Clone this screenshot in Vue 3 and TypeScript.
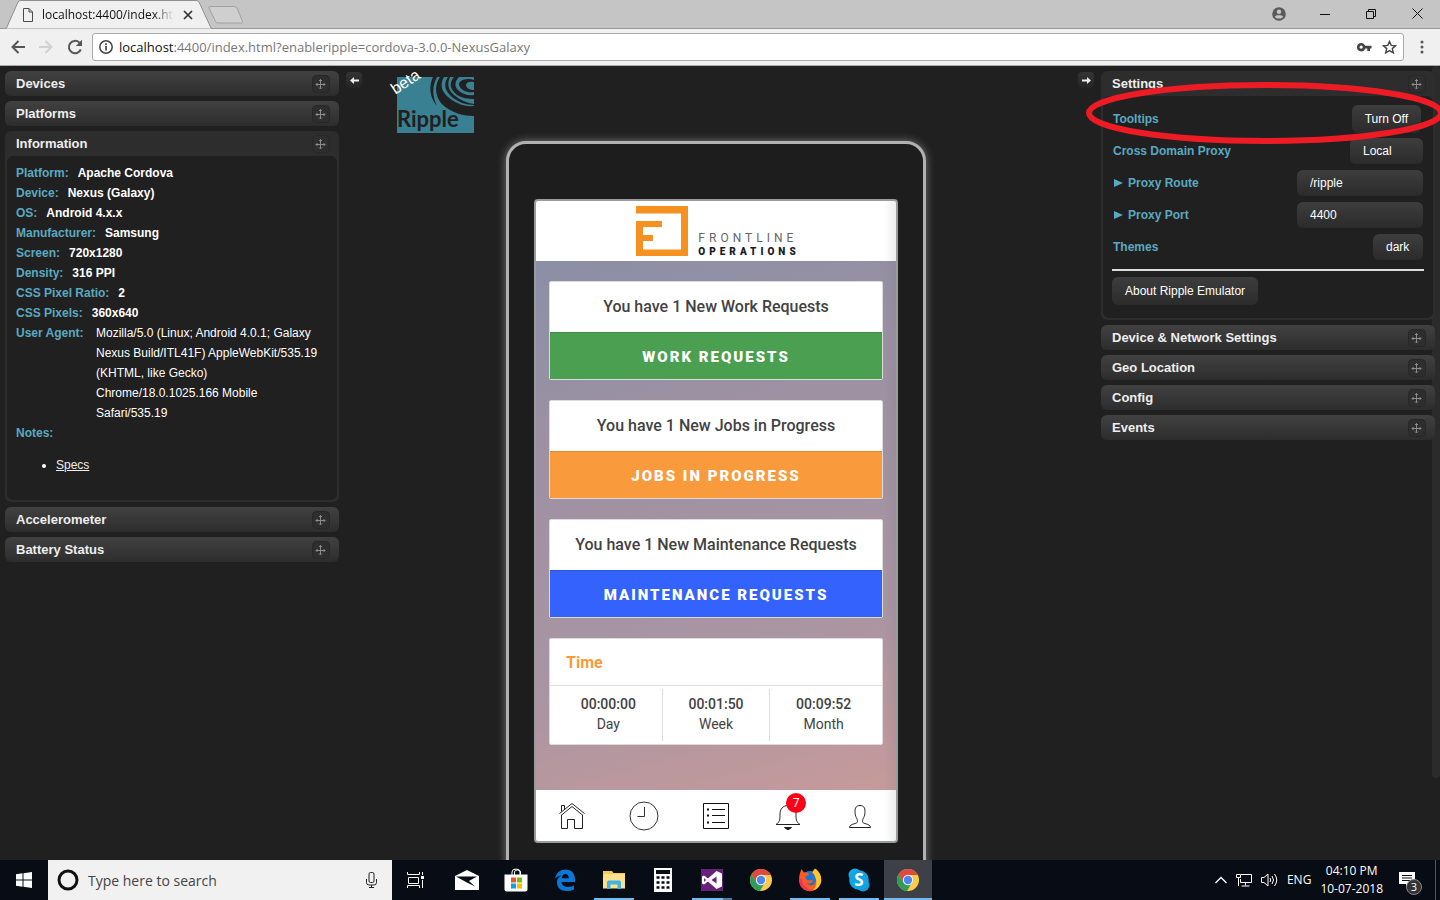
<script setup lang="ts">
import { ref } from 'vue'

interface Fact {
  label: string
  value: string
}
interface Card {
  message: string
  action: string
  tone: string
}

const url = ref('localhost:4400/index.html?enableripple=cordova-3.0.0-NexusGalaxy')
const proxyMode = ref('Local')
const proxyRoute = ref('/ripple')
const proxyPort = ref('4400')
const theme = ref('dark')
const search = ref('')

const facts: Fact[] = [
  { label: 'Platform:', value: 'Apache Cordova' },
  { label: 'Device:', value: 'Nexus (Galaxy)' },
  { label: 'OS:', value: 'Android 4.x.x' },
  { label: 'Manufacturer:', value: 'Samsung' },
  { label: 'Screen:', value: '720x1280' },
  { label: 'Density:', value: '316 PPI' },
  { label: 'CSS Pixel Ratio:', value: '2' },
  { label: 'CSS Pixels:', value: '360x640' },
]

const userAgent =
  'Mozilla/5.0 (Linux; Android 4.0.1; Galaxy Nexus Build/ITL41F) AppleWebKit/535.19 (KHTML, like Gecko) Chrome/18.0.1025.166 Mobile Safari/535.19'

const cards: Card[] = [
  { message: 'You have 1 New Work Requests', action: 'WORK REQUESTS', tone: 'green' },
  { message: 'You have 1 New Jobs in Progress', action: 'JOBS IN PROGRESS', tone: 'orange' },
  { message: 'You have 1 New Maintenance Requests', action: 'MAINTENANCE REQUESTS', tone: 'blue' },
]

const times = [
  { value: '00:00:00', label: 'Day' },
  { value: '00:01:50', label: 'Week' },
  { value: '00:09:52', label: 'Month' },
]

const upperLeft = ['Devices', 'Platforms']
const lowerLeft = ['Accelerometer', 'Battery Status']
const lowerRight = ['Device & Network Settings', 'Geo Location', 'Config', 'Events']
</script>

<template>
  <div class="desktop">
    <svg class="defs" width="0" height="0" aria-hidden="true">
      <symbol id="move" viewBox="0 0 18 18">
        <rect x="0.5" y="0.5" width="17" height="17" rx="4" fill="#2e2e2e" stroke="#272727" />
        <path d="M8.500 4.500v9M4 9.500h9M7 6L8.500 4.500 10 6M7 12.500L8.500 14 10 12.500M5.500 8L4 9.500 5.500 11M11.500 8L13 9.500 11.500 11" fill="none" stroke="#8c8c8c" />
      </symbol>
      <symbol id="chrome" viewBox="0 0 24 24">
        <circle cx="12" cy="12" r="11" fill="#fccb4c" />
        <path d="M2.500 6.500L7.500 15 12 12l0-5h9.800A11 11 0 0 0 2.500 6.500z" fill="#db4c3f" />
        <path d="M2.500 6.500A11 11 0 0 0 11 23l5-8.600-4 1.600-4.500-1.500z" fill="#2f9d58" />
        <circle cx="12" cy="12" r="5.200" fill="#f3f3f3" />
        <circle cx="12" cy="12" r="4.200" fill="#4d86ef" />
      </symbol>
    </svg>

    <header class="browser">
      <div class="titlebar">
        <div class="tab">
          <svg class="tab-shape" viewBox="0 0 210 29" aria-hidden="true">
            <path d="M0 28.500L1.500 28 13 2Q14 .5 16 .5H191Q193 .5 194 2L206 28l1.500 .5" fill="#f0f0f0" stroke="#8f8f8f" />
          </svg>
          <div class="tab-content">
            <svg width="10" height="14" viewBox="0 0 10 14" fill="none" stroke="#4a4a4a" aria-hidden="true">
              <path d="M.5 .5h5.500l3.500 3.500v9.500h-9zM6 .5V4h3.500" />
            </svg>
            <span class="tab-title">localhost:4400/index.html</span>
            <button class="plain" aria-label="Close tab">
              <svg width="10" height="10" viewBox="0 0 10 10" stroke="#333" stroke-width="1.700">
                <path d="M1 1l8 8M9 1L1 9" />
              </svg>
            </button>
          </div>
        </div>
        <button class="plain new-tab" aria-label="New tab">
          <svg width="36" height="18" viewBox="0 0 36 18">
            <path d="M2 .5H26Q28 .5 29 2L34.500 15.500Q35 17 33.500 17H10Q8.500 17 7.500 15.500L1 2Q.5 .5 2 .5z" fill="#cfcfcf" stroke="#a0a0a0" />
          </svg>
        </button>
        <div class="window-buttons">
          <button class="plain" aria-label="Profile">
            <svg width="14" height="14" viewBox="0 0 14 14">
              <circle cx="7" cy="7" r="6.800" fill="#5a5a5a" />
              <circle cx="7" cy="4.800" r="2.200" fill="#c5c5c5" />
              <path d="M2.800 9.700C4 7.800 10 7.800 11.200 9.700 9.500 12.200 4.500 12.200 2.800 9.700z" fill="#c5c5c5" />
            </svg>
          </button>
          <button class="plain" aria-label="Minimize">
            <svg width="10" height="10" viewBox="0 0 10 10" stroke="#111"><path d="M0 5.500h10" /></svg>
          </button>
          <button class="plain" aria-label="Restore">
            <svg width="10" height="10" viewBox="0 0 10 10" fill="none" stroke="#111">
              <path d="M.5 2.500h7v7h-7zM2.500 2.500v-2h7v7h-2" />
            </svg>
          </button>
          <button class="plain" aria-label="Close">
            <svg width="11" height="11" viewBox="0 0 11 11" stroke="#111"><path d="M.5 .5l10 10M10.500 .5l-10 10" /></svg>
          </button>
        </div>
      </div>
      <div class="toolbar">
        <button class="plain" aria-label="Back">
          <svg width="14" height="14" viewBox="0 0 14 14" fill="none" stroke="#555" stroke-width="2"><path d="M14 7H2M7.500 1L1.500 7l6 6" /></svg>
        </button>
        <button class="plain" aria-label="Forward">
          <svg width="14" height="14" viewBox="0 0 14 14" fill="none" stroke="#d0d0d0" stroke-width="2"><path d="M0 7h12M6.500 1l6 6-6 6" /></svg>
        </button>
        <button class="plain" aria-label="Reload">
          <svg width="16" height="16" viewBox="0 0 16 16">
            <path d="M13.800 10.500A6.200 6.200 0 1 1 12.400 3.600L14 5.200" fill="none" stroke="#555" stroke-width="2" />
            <path d="M15 .8V7H8.800z" fill="#555" />
          </svg>
        </button>
        <div class="omnibox">
          <svg width="14" height="14" viewBox="0 0 14 14" aria-hidden="true">
            <circle cx="7" cy="7" r="6.200" fill="none" stroke="#444" stroke-width="1.500" />
            <path d="M6.200 6h1.700v4.500H6.200zM6.200 3.300h1.700V5H6.200z" fill="#444" />
          </svg>
          <label class="url">
            <span class="url-text" aria-hidden="true"><b>localhost</b>:4400/index.html?enableripple=cordova-3.0.0-NexusGalaxy</span>
            <input v-model="url" aria-label="Address" />
          </label>
          <svg width="15" height="9" viewBox="0 0 15 9" aria-hidden="true">
            <path d="M4.200 0A4.200 4.200 0 0 1 8.200 2.800H14.500V5.500H13V8H10.300V5.500H8.200A4.200 4.200 0 1 1 4.200 0zM4.200 2.600a1.600 1.600 0 1 0 .01 0z" fill="#444" fill-rule="evenodd" />
          </svg>
          <svg width="15" height="14" viewBox="0 0 15 14" fill="none" stroke="#444" stroke-width="1.400" aria-hidden="true">
            <path d="M7.500 1.500L9.200 5.400l4.300 .4-3.200 2.800 1 4.200-3.800-2.200-3.800 2.200 1-4.200L1.500 5.800l4.300-.4z" />
          </svg>
        </div>
        <button class="plain" aria-label="Menu">
          <svg width="4" height="14" viewBox="0 0 4 14" fill="#555"><circle cx="2" cy="2" r="1.500" /><circle cx="2" cy="7" r="1.500" /><circle cx="2" cy="12" r="1.500" /></svg>
        </button>
      </div>
    </header>

    <main class="emulator">
      <aside class="side">
        <section v-for="name in upperLeft" :key="name" class="bar">
          <h2>{{ name }}</h2>
          <svg class="grip"><use href="#move" /></svg>
        </section>
        <section class="box">
          <div class="box-head">
            <h2>Information</h2>
            <svg class="grip"><use href="#move" /></svg>
          </div>
          <div class="box-body info">
            <dl>
              <div v-for="f in facts" :key="f.label" class="fact">
                <dt>{{ f.label }}</dt>
                <dd>{{ f.value }}</dd>
              </div>
              <div class="fact">
                <dt class="agent-label">User Agent:</dt>
                <dd class="agent">{{ userAgent }}</dd>
              </div>
              <div class="fact"><dt>Notes:</dt></div>
            </dl>
            <ul>
              <li><a href="#specs">Specs</a></li>
            </ul>
          </div>
        </section>
        <section v-for="name in lowerLeft" :key="name" class="bar">
          <h2>{{ name }}</h2>
          <svg class="grip"><use href="#move" /></svg>
        </section>
      </aside>

      <button class="fold" aria-label="Hide left panels">
        <svg width="9" height="7" viewBox="0 0 9 7"><path d="M0 3.500L4 0v2.500h5v2H4V7z" fill="#eee" /></svg>
      </button>

      <div class="stage">
        <div class="logo">
          <svg width="77" height="56" viewBox="0 0 77 56" role="img" aria-label="Ripple">
            <rect width="77" height="56" fill="#3a8093" />
            <g fill="#202020">
              <path d="M36 0C32 8 32 20 40 29 35 19 35 9 40 0z" />
              <path d="M43 0C36 10 39 22 47 29 56 36 66 39 77 39V29C67 30 58 26 51 20 44 14 43 7 47 0z" />
              <path d="M51 0C46 7 48 14 55 20 61 25 69 28 77 28V27C70 26 63 23 57 18 51 13 50 7 53 0z" />
              <path d="M57 0C51 7 54 13 60 18 65 21 71 22 77 22V18C71 19 65 17 61 13 57 9 58 4 62 0z" />
              <path d="M77 3C69 0 61 4 62 8 64 14 71 16 77 15V13C73 13 69 11 69 8 69 5 73 4 77 5z" />
            </g>
            <text x="0" y="50" class="wordmark">Ripple</text>
          </svg>
          <span class="beta">beta</span>
        </div>

        <div class="phone">
          <div class="screen">
            <header class="app-head">
              <svg width="52" height="50" viewBox="0 0 52 50" fill="#f49120" aria-hidden="true">
                <path d="M0 0h52v50H0V15h26v6H7v8h10v6H7v8.500h38V7.500H0z" />
              </svg>
              <div class="brand">
                <span class="brand-top">FRONTLINE</span>
                <span class="brand-bottom">OPERATIONS</span>
              </div>
            </header>
            <div class="app-body">
              <article v-for="c in cards" :key="c.action" class="card">
                <p>{{ c.message }}</p>
                <button :class="['action', c.tone]">{{ c.action }}</button>
              </article>
              <article class="card time">
                <h3>Time</h3>
                <div class="times">
                  <div v-for="t in times" :key="t.label" class="slot">
                    <strong>{{ t.value }}</strong>
                    <span>{{ t.label }}</span>
                  </div>
                </div>
              </article>
            </div>
            <nav class="app-nav">
              <button class="plain" aria-label="Home">
                <svg width="26" height="28" viewBox="0 0 26 28" fill="none" stroke="#222">
                  <path d="M.5 11.500L13 1.500l12.500 10M2 13.500L13 4.500l11 9M2.500 9.500v-6h3v3.500M2.500 13v13.500h6v-9h7v9h8V13" />
                </svg>
              </button>
              <button class="plain" aria-label="History">
                <svg width="30" height="30" viewBox="0 0 30 30" fill="none" stroke="#333">
                  <circle cx="15" cy="15" r="14" /><path d="M15.500 6v9.500H8.500" />
                </svg>
              </button>
              <button class="plain" aria-label="Lists">
                <svg width="28" height="28" viewBox="0 0 28 28" fill="none" stroke="#111">
                  <path d="M1.500 1.500h25v25h-25zM10 7.500h13M10 13.500h13M10 20.500h13" />
                  <path d="M5 7.500h2M5 13.500h2M5 20.500h2" stroke-width="2" />
                </svg>
              </button>
              <button class="plain bell" aria-label="Notifications">
                <svg width="26" height="28" viewBox="0 0 26 28" fill="none" stroke="#222">
                  <path d="M1 22.500C5 20 5 17 5 12 5 7 8 3.500 13 3.500S21 7 21 12c0 5 0 8 4 10.500z" />
                  <path d="M9.500 25.500h7L13 28z" fill="#111" />
                </svg>
                <span class="badge">7</span>
              </button>
              <button class="plain" aria-label="Profile">
                <svg width="24" height="28" viewBox="0 0 24 28" fill="none" stroke="#222">
                  <path d="M1.500 25.500C2 21 9.500 22.500 9.500 19.500 9.500 16 7 15.500 7 9.500 7 5.500 8.500 3.500 12 3.500s5 2 5 6c0 6-2.500 6.500-2.500 10 0 3 7.500 1.500 8 6z" />
                </svg>
              </button>
            </nav>
          </div>
        </div>
      </div>

      <button class="fold" aria-label="Hide right panels">
        <svg width="9" height="7" viewBox="0 0 9 7"><path d="M9 3.500L5 0v2.500H0v2h5V7z" fill="#eee" /></svg>
      </button>

      <aside class="side right">
        <div class="scroll-strip"></div>
        <section class="box">
          <div class="box-head">
            <h2>Settings</h2>
            <svg class="grip"><use href="#move" /></svg>
          </div>
          <div class="box-body settings">
            <div class="row">
              <label for="tips">Tooltips</label>
              <button id="tips" class="ctl tall toggle">Turn Off</button>
            </div>
            <div class="row">
              <label for="mode">Cross Domain Proxy</label>
              <select id="mode" v-model="proxyMode" class="ctl mode">
                <option>Local</option>
                <option>Remote</option>
                <option>Disabled</option>
              </select>
            </div>
            <div class="row">
              <label for="route"><i class="caret"></i>Proxy Route</label>
              <input id="route" v-model="proxyRoute" class="ctl text" />
            </div>
            <div class="row">
              <label for="port"><i class="caret"></i>Proxy Port</label>
              <input id="port" v-model="proxyPort" class="ctl text" />
            </div>
            <div class="row">
              <label for="theme">Themes</label>
              <select id="theme" v-model="theme" class="ctl">
                <option>dark</option>
              </select>
            </div>
            <hr />
            <button class="ctl tall">About Ripple Emulator</button>
          </div>
        </section>
        <section v-for="name in lowerRight" :key="name" class="bar">
          <h2>{{ name }}</h2>
          <svg class="grip"><use href="#move" /></svg>
        </section>
        <svg class="ring" width="358" height="64" viewBox="0 0 358 64" aria-hidden="true">
          <ellipse cx="179" cy="32" rx="176" ry="28" fill="none" stroke="#ed1c24" stroke-width="6" />
        </svg>
      </aside>
    </main>

    <footer class="taskbar">
      <button class="plain start" aria-label="Start">
        <svg width="16" height="16" viewBox="0 0 16 16" fill="#fff">
          <path d="M0 2.200L6.500 1.300V7.500H0zM7.500 1.200L16 0v7.500H7.500zM0 8.500h6.500v6.200L0 13.800zM7.500 8.500H16V16l-8.500-1.200z" />
        </svg>
      </button>
      <label class="search">
        <svg width="22" height="22" viewBox="0 0 22 22" aria-hidden="true">
          <circle cx="11" cy="11" r="9" fill="none" stroke="#111" stroke-width="3" />
        </svg>
        <input v-model="search" placeholder="Type here to search" aria-label="Search" />
        <svg width="11" height="16" viewBox="0 0 11 16" fill="none" stroke="#222" aria-hidden="true">
          <rect x="3" y=".5" width="5" height="10" rx="1.500" /><path d="M.5 7v3.500q0 2.500 2.500 2.500h5q2.500 0 2.500-2.500V7M5.500 13v2.500M3 15.500h5" />
        </svg>
      </label>
      <button class="plain app view" aria-label="Task view">
        <svg width="18" height="16" viewBox="0 0 18 16" fill="none" stroke="#fff">
          <path d="M1.500 5.500h10v6h-10zM.5 0v2.500h12V0M.5 16v-2.500h12V16M15.500 0v3M15.500 8v8" /><path d="M14 5.500h3" stroke-width="3" />
        </svg>
      </button>
      <button class="plain app" aria-label="Mail">
        <svg width="24" height="20" viewBox="0 0 24 20">
          <path d="M0 6L12 0l12 6v14H0z" fill="#fff" /><path d="M1 6.500h21L14 11l6 5.500L11 12z" fill="#090d15" />
        </svg>
      </button>
      <button class="plain app" aria-label="Store">
        <svg width="24" height="24" viewBox="0 0 24 24">
          <path d="M8 7V4q0-3 4-3t4 3v3M10.500 7V4q0-2 3-2t3 2v3" fill="none" stroke="#fff" />
          <path d="M.5 6.500h23v15q0 2-2 2h-19q-2 0-2-2z" fill="#fff" />
          <path d="M7 9.500h5v5H7z" fill="#f0502a" /><path d="M13 9.500h5v5h-5z" fill="#7eb900" />
          <path d="M7 15.500h5v5H7z" fill="#02a3ee" /><path d="M13 15.500h5v5h-5z" fill="#feb800" />
        </svg>
      </button>
      <button class="plain app" aria-label="Edge">
        <svg width="22" height="22" viewBox="0 0 22 22">
          <path d="M1 9.500C2.500 3.500 6.500 .5 11.500 .5 17.500 .5 21 4.500 21 10.500V13H7.500C7.800 16.500 10.500 18 14 18q3.500 0 6-1.500v4Q17 22 13 22C6.500 22 3 18.500 3 13.500 3 9.500 5.500 7.500 7.500 6.500 4.500 6.800 2.500 8 1 9.500zM7.700 9.200H14.800C14.800 6.500 13.500 5 11.300 5S8 6.800 7.700 9.200z" fill="#0a78d7" fill-rule="evenodd" />
        </svg>
      </button>
      <button class="plain app open" aria-label="File Explorer">
        <svg width="22" height="20" viewBox="0 0 22 20">
          <path d="M0 1h9l1.500 2H22v15H0z" fill="#f7c85a" /><path d="M1 4h21v14.500H0V7z" fill="#fde08d" />
          <path d="M4 19v-7q0-1.500 1.500-1.500h11q1.500 0 1.500 1.500v7h-3.500v-4.500h-7V19z" fill="#43b3e6" />
        </svg>
      </button>
      <button class="plain app" aria-label="Calculator">
        <svg width="18" height="24" viewBox="0 0 18 24">
          <path d="M0 0h18v24H0z" fill="#fff" /><path d="M2 2h14v4H2z" fill="#080c14" />
          <path d="M2.500 9.500h13M2.500 14.500h13M2.500 19.500h13" stroke="#080c14" stroke-width="2.500" stroke-dasharray="3 2" />
        </svg>
      </button>
      <button class="plain app open more" aria-label="Visual Studio">
        <svg width="22" height="24" viewBox="0 0 22 24">
          <path d="M0 1h22v22H0z" fill="#68217a" />
          <path d="M15.500 3L21 5.500v13L15.500 21 7 13.500 3 16.500 1 15.500V8.500l2-1 4 3zM3 10v4l2-2zM15.500 8.500L10.500 12l5 3.500z" fill="#fff" fill-rule="evenodd" />
        </svg>
      </button>
      <button class="plain app" aria-label="Chrome"><svg width="24" height="24"><use href="#chrome" /></svg></button>
      <button class="plain app open" aria-label="Firefox">
        <svg width="24" height="24" viewBox="0 0 24 24">
          <circle cx="12" cy="13" r="10" fill="#214fa5" />
          <circle cx="12" cy="10" r="7" fill="#2374cf" />
          <path d="M2 5L3.500 1 6 4.500C9 4 10 5 11 6.500L7.500 8.500C7 12 10 13 15 12 14 16 10 16 8 14.500 11 19 18 18 18 11 18 8 17 6 14 4.500 15 2 16 1 18 1 23 5 24 11 22 16 19 22 13 25 7 22 1 19 0 12 2 5z" fill="#f95b20" />
          <path d="M17 .5C23 5 24.500 11 22.500 16 20.500 20 18 22 15 22.500 20 17 19 10 14.500 4.500z" fill="#fdc72a" />
          <path d="M1 10C1 19 7 24 15 22.500 8 21 4 17 4 11z" fill="#f72f62" />
        </svg>
      </button>
      <button class="plain app open" aria-label="Skype">
        <svg width="22" height="24" viewBox="0 0 22 24">
          <circle cx="7" cy="7" r="6.500" fill="#19aae8" /><circle cx="15" cy="17" r="6.500" fill="#149bd9" /><circle cx="11" cy="12" r="9.800" fill="#0ea5e5" />
          <text x="11" y="18" class="skype-s">S</text>
        </svg>
      </button>
      <button class="plain app open active" aria-label="Chrome window"><svg width="24" height="24"><use href="#chrome" /></svg></button>

      <div class="tray">
        <svg width="12" height="8" viewBox="0 0 12 8" fill="none" stroke="#fff" stroke-width="1.300"><path d="M.5 7L6 1.500 11.500 7" /></svg>
        <svg width="16" height="14" viewBox="0 0 16 14" fill="none" stroke="#fff">
          <path d="M5 1.500h10.500v8H4.500V6M9.500 9.500v3M5.500 13h8M.5 1.500h4v3h-4zM2.500 4.500V13" />
        </svg>
        <svg width="17" height="14" viewBox="0 0 17 14" fill="none" stroke="#fff">
          <path d="M.5 4.500h2.500l4-3.500v12L3 9.500H.5zM9 5q1.500 2 0 4M11 3q3 4 0 8M13.500 1q4.500 6 0 12" />
        </svg>
        <span class="lang">ENG</span>
        <time class="clock"><span>04:10 PM</span><span>10-07-2018</span></time>
        <button class="plain notices" aria-label="Notifications">
          <svg width="16" height="16" viewBox="0 0 16 16"><path d="M0 0h16v12h-6l-3 3.500V12H0z" fill="#fff" /><path d="M3 3.500h10M3 6h10M3 8.500h10" stroke="#0a0e15" /></svg>
          <span class="count">3</span>
        </button>
        <i class="peek"></i>
      </div>
    </footer>
  </div>
</template>

<style>
body {
  margin: 0;
  background: #202020;
}
</style>

<style scoped>
.desktop {
  height: 100vh;
  display: flex;
  flex-direction: column;
  overflow: hidden;
  font-family: 'Liberation Sans', Arial, sans-serif;
  font-size: 12px;
  color: #fff;
  background: #202020;
}
.desktop * {
  box-sizing: border-box;
}
.defs {
  position: absolute;
}
svg {
  display: block;
  flex: none;
}
.plain {
  border: 0;
  padding: 0;
  background: none;
  display: flex;
  align-items: center;
  justify-content: center;
}
input,
select,
button {
  font-family: inherit;
  outline: none;
}

/* browser chrome */
.browser {
  flex: none;
  font-family: 'Open Sans', 'Noto Sans', sans-serif;
  color: #111;
}
.titlebar {
  display: flex;
  height: 29px;
  padding-left: 5px;
  background: #c5c5c5;
  box-shadow: inset 0 -1px #999;
}
.tab {
  display: grid;
  grid-template-columns: minmax(0, 1fr);
  width: 210px;
}
.tab-shape,
.tab-content {
  grid-area: 1 / 1;
}
.tab-shape {
  width: 210px;
  height: 29px;
}
.tab-content {
  display: flex;
  align-items: center;
  padding: 0 22px 0 18px;
}
.tab-title {
  flex: 1;
  min-width: 0;
  margin: 0 9px;
  overflow: hidden;
  white-space: nowrap;
  font-size: 12px;
  mask-image: linear-gradient(90deg, #000 85%, transparent);
}
.new-tab {
  height: 30px;
  margin-left: -7px;
}
.window-buttons {
  display: flex;
  margin-left: auto;
}
.window-buttons .plain {
  width: 46px;
  height: 27px;
}
.toolbar {
  display: flex;
  align-items: center;
  gap: 14px;
  height: 37px;
  padding: 0 16px 0 11px;
  background: #f0f0f0;
  border-bottom: 1px solid #aaa;
}
.omnibox {
  flex: 1;
  display: flex;
  align-items: center;
  gap: 10px;
  height: 28px;
  margin: 0 2px 0 -5px;
  padding: 0 6px;
  background: #fff;
  border: 1px solid #aaa;
  border-radius: 3px;
}
.url {
  flex: 1;
  display: grid;
  margin-left: -4px;
  font-size: 13px;
  color: #777;
}
.url-text,
.url input {
  grid-area: 1 / 1;
  line-height: 20px;
}
.url b {
  font-weight: 400;
  color: #111;
}
.url input {
  border: 0;
  padding: 0;
  font-size: 13px;
  background: transparent;
  color: transparent;
}

/* emulator */
.emulator {
  flex: 1;
  min-height: 0;
  display: flex;
  align-items: flex-start;
  gap: 7px;
  overflow: hidden;
  position: relative;
}
.side {
  flex: none;
  width: 339px;
  padding: 5px 0 0 5px;
  display: flex;
  flex-direction: column;
  gap: 5px;
}
.side.right {
  padding: 5px 5px 0 0;
}
.bar,
.box-head {
  display: flex;
  align-items: center;
  justify-content: space-between;
  height: 25px;
  padding: 0 9px 0 11px;
}
.bar {
  position: relative;
  border-radius: 6px;
  background: linear-gradient(#414141, #2d2d2d);
}
h2 {
  margin: 0;
  font-size: 13px;
  line-height: 25px;
  font-weight: 700;
  color: #eee;
}
.grip {
  width: 18px;
  height: 18px;
}
.box {
  position: relative;
  padding: 0 2px 2px;
  border-radius: 6px;
  background: #2d2d2d;
}
.box-head {
  margin: 0 -2px;
}
.box-body {
  border-radius: 6px;
  background: #202020;
  padding: 7px 9px;
}
.info {
  padding-bottom: 25px;
}
dl {
  margin: 0;
}
.fact {
  display: flex;
  line-height: 20px;
  font-weight: 700;
}
dt,
.row label {
  color: #5ba9c0;
}
dd {
  margin: 0 0 0 9px;
}
.agent-label {
  width: 71px;
}
.agent {
  width: 230px;
  font-weight: 400;
}
.info ul {
  margin: 12px 0 0;
  padding-left: 40px;
  line-height: 20px;
}
.info a {
  color: #eee;
}
.fold {
  flex: none;
  width: 16px;
  height: 16px;
  margin-top: 6px;
  padding: 0;
  display: flex;
  align-items: center;
  justify-content: center;
  border: 0;
  border-radius: 4px;
  background: linear-gradient(#353535, #242424);
}
.stage {
  flex: 1;
  display: flex;
  flex-direction: column;
  align-items: center;
  padding: 11px 8px 0 0;
  gap: 8px;
}
.logo {
  position: relative;
  align-self: flex-start;
  margin-left: 28px;
}
.wordmark {
  font: 700 22px Lato, sans-serif;
  fill: #202020;
}
.beta {
  position: absolute;
  left: -7px;
  top: -4px;
  font-size: 16px;
  line-height: 18px;
  transform: rotate(-34deg);
}
.phone {
  width: 420px;
  padding: 55px 25px;
  border: 3px solid #b1b1b1;
  border-radius: 20px;
  background: #1d1d1d;
  box-shadow: 0 0 9px #777;
}
.screen {
  position: relative;
  overflow: hidden;
  border: 2px solid #999c9c;
  border-radius: 4px;
  font-family: Roboto, sans-serif;
  color: #424242;
  background: linear-gradient(165deg, #8d8fa6 10%, #9d91a2 35%, #aa95a2 68%, #c59a9b 92%);
}
.screen::after {
  content: '';
  position: absolute;
  inset: 0 0 0 auto;
  width: 12px;
  background: linear-gradient(90deg, transparent, rgba(90, 90, 100, 0.1));
  pointer-events: none;
}
.app-head {
  display: flex;
  justify-content: center;
  gap: 10px;
  height: 60px;
  padding: 5px 0 0 4px;
  background: #fff;
}
.brand {
  display: flex;
  flex-direction: column;
  align-self: flex-start;
  padding-top: 25px;
  white-space: nowrap;
  line-height: 14px;
}
.brand-top {
  font-size: 12px;
  letter-spacing: 4px;
  color: #666;
}
.brand-bottom {
  font-size: 10px;
  font-weight: 900;
  letter-spacing: 4px;
  color: #171b28;
}
.app-body {
  display: flex;
  flex-direction: column;
  gap: 20px;
  padding: 20px 13px 45px;
}
.card {
  border: 1px solid #dcdcdc;
  border-radius: 2px;
  background: #fff;
}
.card p {
  margin: 0;
  font-size: 16px;
  line-height: 50px;
  font-weight: 500;
  text-align: center;
}
.action {
  display: block;
  width: 100%;
  height: 47px;
  padding: 3px 0 0;
  border: 0;
  color: #fff;
  font-size: 15px;
  font-weight: 900;
  letter-spacing: 2px;
  box-shadow: inset 0 1px rgba(0, 0, 0, 0.12);
}
.green {
  background: #4a9f51;
}
.orange {
  background: #f99b3c;
}
.blue {
  background: #3462fc;
}
.time h3 {
  margin: 0;
  padding: 1px 16px 0;
  font-size: 16px;
  line-height: 45px;
  font-weight: 700;
  color: #f99b3c;
  border-bottom: 1px solid #ddd;
}
.times {
  display: flex;
  padding: 3px 5px;
}
.slot {
  flex: 1;
  display: flex;
  flex-direction: column;
  align-items: center;
  padding: 5px 0 7px;
  font-size: 14px;
  line-height: 20px;
}
.slot + .slot {
  border-left: 1px solid #ddd;
}
.slot strong {
  font-weight: 500;
}
.app-nav {
  display: flex;
  height: 51px;
  background: #fff;
}
.app-nav .plain {
  flex: 1;
}
.bell {
  position: relative;
}
.badge {
  position: absolute;
  top: 3px;
  left: 34px;
  width: 20px;
  height: 20px;
  border-radius: 50%;
  background: #fb0017;
  color: #fff;
  font: 12px/20px Roboto, sans-serif;
}

/* settings */
.settings {
  padding-bottom: 13px;
}
.row {
  display: flex;
  align-items: center;
  justify-content: space-between;
  height: 32px;
  padding: 0 1px;
}
.row label {
  display: flex;
  align-items: center;
  font-weight: 700;
}
.caret {
  margin: 0 5px 0 1px;
  border: 4px solid transparent;
  border-left: 9px solid #5ba9c0;
  border-right: 0;
}
.ctl {
  appearance: none;
  height: 26px;
  padding: 0 13px;
  border: 0;
  border-radius: 6px;
  font-size: 12px;
  color: #fff;
  background: linear-gradient(#3d3d3d, #2b2b2b);
}
.tall {
  height: 28px;
}
.toggle {
  margin-right: 2px;
}
.mode {
  width: 73px;
}
.text {
  width: 126px;
}
hr {
  height: 2px;
  margin: 6px 0;
  border: 0;
  background: #ddd;
}
.scroll-strip {
  position: absolute;
  right: 0;
  top: 0;
  bottom: 82px;
  width: 8px;
  border-radius: 4px;
  background: #2b2b2b;
}
.ring {
  position: absolute;
  right: -4px;
  top: 15px;
}

/* taskbar */
.taskbar {
  flex: none;
  display: flex;
  height: 40px;
  background: #080c14;
  font-family: 'Open Sans', 'Noto Sans', sans-serif;
}
.start {
  width: 48px;
}
.search {
  display: flex;
  align-items: center;
  width: 344px;
  padding: 0 15px 0 9px;
  gap: 9px;
  background: #f1f1f1;
}
.search input {
  flex: 1;
  min-width: 0;
  border: 0;
  padding: 0;
  background: none;
  font-size: 14px;
  color: #333;
}
.search input::placeholder {
  color: #444;
  opacity: 1;
}
.app {
  width: 48px;
  margin-right: 1px;
}
.view {
  margin-right: 3px;
}
.open {
  background: linear-gradient(#76b9ed, #76b9ed) bottom / 40px 2px no-repeat;
}
.more {
  background: linear-gradient(90deg, #76b9ed 31px, #4f7ea4 31px) bottom / 40px 2px no-repeat;
}
.active {
  background: linear-gradient(#76b9ed, #76b9ed) bottom / 48px 2px no-repeat #3d4046;
}
.skype-s {
  font: 700 17px 'Open Sans', sans-serif;
  fill: #fff;
  text-anchor: middle;
}
.tray {
  display: flex;
  align-items: center;
  gap: 9px;
  margin-left: auto;
  padding-right: 4px;
}
.lang,
.clock {
  font-size: 12px;
  line-height: 18px;
}
.clock {
  display: flex;
  flex-direction: column;
  align-items: center;
}
.notices {
  position: relative;
  margin: 0 11px 0 7px;
}
.count {
  position: absolute;
  left: 7px;
  top: 7px;
  width: 16px;
  height: 16px;
  border: 1px solid #888;
  border-radius: 50%;
  background: #333;
  color: #fff;
  font-size: 11px;
  line-height: 14px;
}
.peek {
  width: 1px;
  height: 40px;
  background: #555;
}
</style>
